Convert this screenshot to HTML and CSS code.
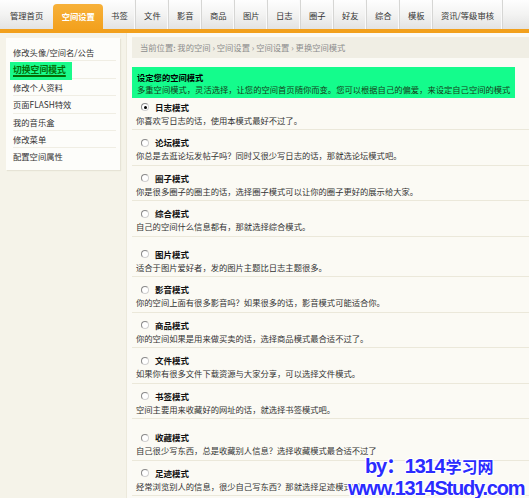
FILE: index.html
```html
<!DOCTYPE html>
<html lang="zh-CN">
<head>
<meta charset="utf-8">
<title>空间设置 - 更换空间模式</title>
<link rel="stylesheet" href="styles.css">
</head>
<body>
<header class="nav">
  <ul class="tabs">
    <li class="tab first">管理首页</li>
    <li class="tab active">空间设置</li>
    <li class="tab">书签</li>
    <li class="tab">文件</li>
    <li class="tab">影音</li>
    <li class="tab">商品</li>
    <li class="tab">图片</li>
    <li class="tab">日志</li>
    <li class="tab">圈子</li>
    <li class="tab">好友</li>
    <li class="tab">综合</li>
    <li class="tab">模板</li>
    <li class="tab">资讯/等级审核</li>
  </ul>
</header>
<div class="main">
  <aside class="sidebar">
    <ul class="menu">
      <li>修改头像/空间名/公告</li>
      <li><span class="current">切换空间模式</span></li>
      <li>修改个人资料</li>
      <li>页面FLASH特效</li>
      <li>我的音乐盒</li>
      <li>修改菜单</li>
      <li>配置空间属性</li>
    </ul>
  </aside>
  <section class="content">
    <div class="crumb">当前位置: 我的空间 › 空间设置 › 空间设置 › 更换空间模式</div>
    <div class="intro">
      <div class="intro-title">设定您的空间模式</div>
      <div class="intro-desc">多重空间模式，灵活选择，让您的空间首页随你而变。您可以根据自己的偏爱，来设定自己空间的模式</div>
    </div>
    <ul class="modes">
      <li class="mode"><div class="mode-title"><span class="radio checked"></span>日志模式</div><div class="mode-desc">你喜欢写日志的话，使用本模式最好不过了。</div></li>
      <li class="mode"><div class="mode-title"><span class="radio"></span>论坛模式</div><div class="mode-desc">你总是去逛论坛发帖子吗？同时又很少写日志的话，那就选论坛模式吧。</div></li>
      <li class="mode"><div class="mode-title"><span class="radio"></span>圈子模式</div><div class="mode-desc">你是很多圈子的圈主的话，选择圈子模式可以让你的圈子更好的展示给大家。</div></li>
      <li class="mode"><div class="mode-title"><span class="radio"></span>综合模式</div><div class="mode-desc">自己的空间什么信息都有，那就选择综合模式。</div></li>
      <li class="mode spaced"><div class="mode-title"><span class="radio"></span>图片模式</div><div class="mode-desc">适合于图片爱好者，发的图片主题比日志主题很多。</div></li>
      <li class="mode"><div class="mode-title"><span class="radio"></span>影音模式</div><div class="mode-desc">你的空间上面有很多影音吗？如果很多的话，影音模式可能适合你。</div></li>
      <li class="mode"><div class="mode-title"><span class="radio"></span>商品模式</div><div class="mode-desc">你的空间如果是用来做买卖的话，选择商品模式最合适不过了。</div></li>
      <li class="mode"><div class="mode-title"><span class="radio"></span>文件模式</div><div class="mode-desc">如果你有很多文件下载资源与大家分享，可以选择文件模式。</div></li>
      <li class="mode"><div class="mode-title"><span class="radio"></span>书签模式</div><div class="mode-desc">空间主要用来收藏好的网址的话，就选择书签模式吧。</div></li>
      <li class="mode spaced-more"><div class="mode-title"><span class="radio"></span>收藏模式</div><div class="mode-desc">自己很少写东西，总是收藏别人信息？选择收藏模式最合适不过了</div></li>
      <li class="mode"><div class="mode-title"><span class="radio"></span>足迹模式</div><div class="mode-desc">经常浏览别人的信息，很少自己写东西？那就选择足迹模式吧。</div></li>
    </ul>
  </section>
</div>
<div class="watermark">
  <div class="wm-line wm-by">by：1314<span class="wm-cjk">学习网</span></div>
  <div class="wm-line">www.1314Study.com</div>
</div>
</body>
</html>
```

FILE: styles.css
```css
html, body {
  margin: 0;
  padding: 0;
  overflow: hidden;
}
body {
  background: #f5f3e9;
  font-family: "Noto Sans CJK SC", "Liberation Sans", sans-serif;
  font-size: 8.3px;
  color: #333;
  width: 529px;
  height: 498px;
  position: relative;
}
ul {
  list-style: none;
  margin: 0;
  padding: 0;
}

/* ---------- top nav ---------- */
.nav {
  height: 29px;
  background: linear-gradient(#fefefe, #f3f3f2 50%, #e3e3e2);
  border-bottom: 4px solid #f2a01c;
}
.tabs {
  display: flex;
  align-items: flex-end;
  height: 29px;
}
.tab {
  height: 29px;
  line-height: 31px;
  padding: 0 7.7px;
  border-right: 1px solid #d6d6d4;
  box-shadow: inset -1px 0 0 #fafafa;
  color: #333;
  white-space: nowrap;
}
.tab.first {
  padding: 0 10px;
  border-right: 0;
  box-shadow: none;
}
.tab.active {
  height: 25px;
  line-height: 25px;
  padding: 0 8.5px;
  background: linear-gradient(#f7b13a, #f3a11d);
  border-radius: 4px 4px 0 0;
  border-right: 0;
  box-shadow: none;
  color: #fff;
  font-weight: bold;
}

/* ---------- layout ---------- */
.main {
  display: flex;
  align-items: flex-start;
}
.sidebar {
  width: 114px;
  margin: 5px 0 0 6px;
  background: #fdfdfa;
  box-shadow: 1px 1px 1px #e6e3d6;
}
.menu {
  padding: 6px 4px 5px 7px;
}
.menu li {
  height: 16.4px;
  line-height: 16.4px;
  border-bottom: 1px solid #f0eee4;
  color: #333;
  white-space: nowrap;
}
.menu li:last-child {
  border-bottom: 0;
}
.current {
  display: inline-block;
  height: 18px;
  line-height: 16px;
  margin: 0 0 0 -3px;
  padding: 0 6px 0 3px;
  background: #19fb8b;
  color: #066b06;
  font-weight: bold;
  font-size: 8.8px;
  text-decoration: underline;
  text-decoration-thickness: 1.5px;
  text-underline-offset: 2px;
}

.content {
  flex: 1;
  margin-left: 6px;
  min-height: 470px;
  background: #fbfaf5;
  border-left: 1px solid #ece9dc;
  padding: 4px 0 0 5px;
}
.crumb {
  height: 21px;
  line-height: 21px;
  padding-left: 8px;
  background: #f0eee4;
  color: #8c8c8c;
  white-space: nowrap;
}
.intro {
  display: inline-block;
  margin-top: 9px;
  padding: 4px 5px 3px;
  background: #14fc8c;
  color: #0b2a12;
  white-space: nowrap;
}
.intro-title,
.intro-desc {
  line-height: 12px;
}
.intro-title {
  font-weight: bold;
  color: #000;
}
.intro-desc {
  color: #143d1a;
}

/* ---------- modes ---------- */
.modes {
  margin-top: -1px;
}
.mode {
  padding: 6px 0 2.9px 4px;
  border-bottom: 1px solid #ebe8da;
  background: #fbfaf4;
}
.mode:first-child {
  padding-top: 4px;
}
.mode.spaced {
  padding-top: 11px;
}
.mode.spaced-more {
  padding-top: 12px;
}
.mode-title {
  display: flex;
  align-items: center;
  line-height: 12.8px;
  font-weight: bold;
  font-size: 8.5px;
  color: #111;
}
.mode-desc {
  line-height: 12.8px;
  color: #333;
  white-space: nowrap;
}
.radio {
  width: 6px;
  height: 6px;
  margin: 0 6px 0 5px;
  border: 1px solid #8a8a8a;
  border-right-color: #d0d0d0;
  border-bottom-color: #d0d0d0;
  border-radius: 50%;
  background: #fff;
  position: relative;
  flex: none;
}
.radio.checked::after {
  content: "";
  position: absolute;
  left: 1.5px;
  top: 1.5px;
  width: 3px;
  height: 3px;
  border-radius: 50%;
  background: #000;
}

/* ---------- watermark overlay ---------- */
.watermark {
  position: absolute;
  left: 348px;
  top: 456px;
  font-family: "Liberation Sans", "Noto Sans CJK SC", sans-serif;
  font-weight: bold;
  font-size: 20px;
  letter-spacing: -1.2px;
  color: #2b2bff;
  text-shadow: 1px 1px 0 #fff, -1px -1px 0 #fff, 1px -1px 0 #fff, -1px 1px 0 #fff;
  white-space: nowrap;
}
.wm-line {
  line-height: 20px;
}
.wm-by {
  padding-left: 17px;
}
.wm-cjk {
  font-size: 16px;
  letter-spacing: 0;
  margin-left: 1px;
}
```
